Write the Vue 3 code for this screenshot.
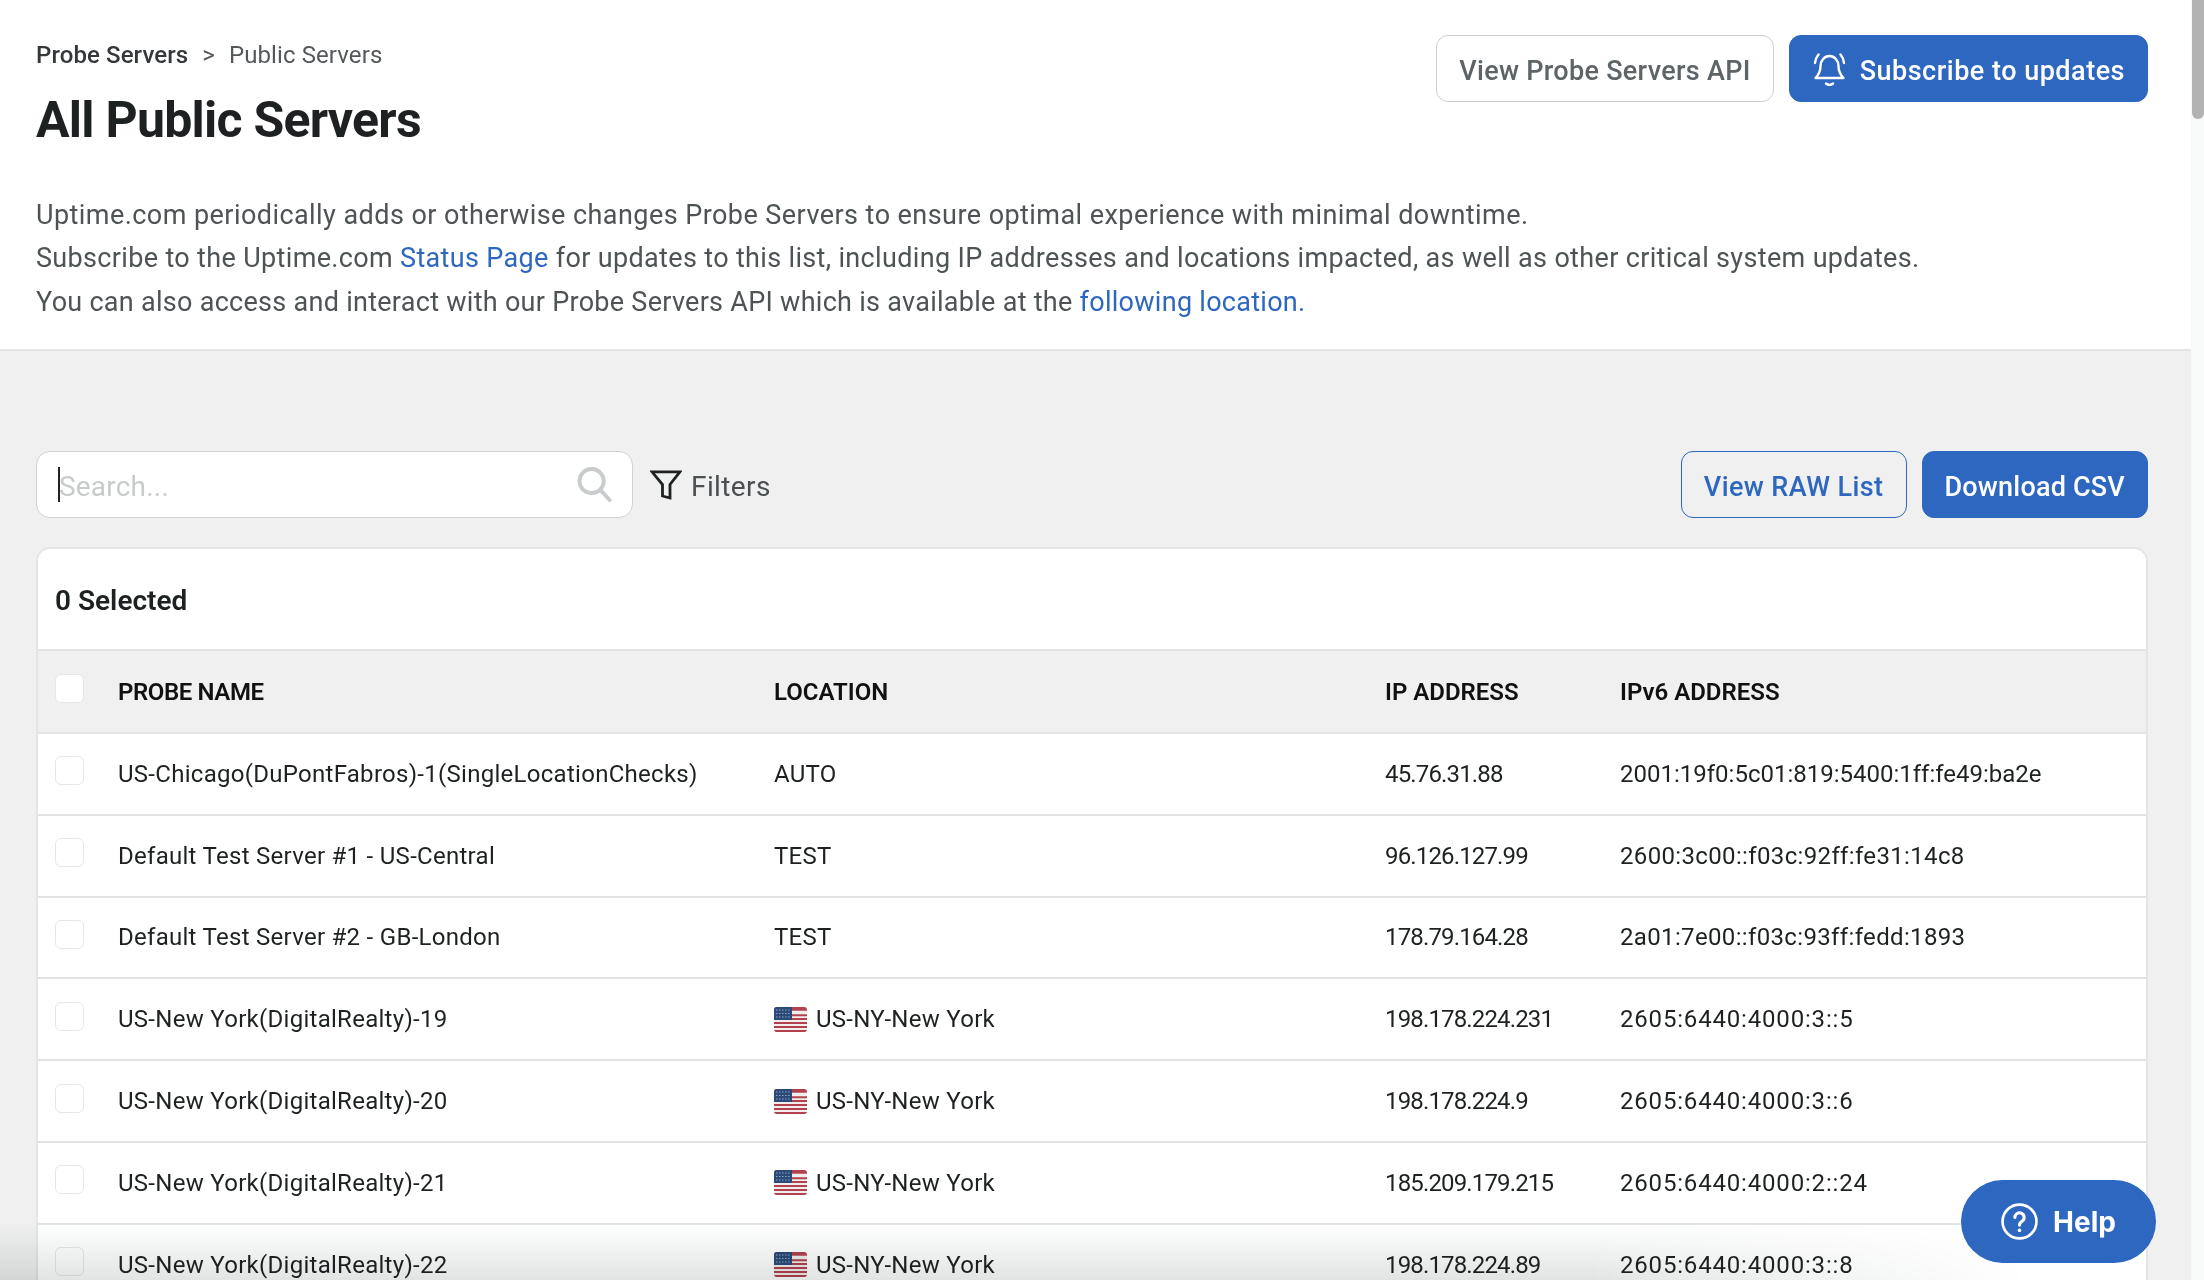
<template>
  <div class="page">
    <div class="main">
      <header class="top">
        <div class="top-row">
          <div>
            <div class="crumbs">
              <span class="crumb-link">Probe Servers</span>
              <span class="crumb-sep">&gt;</span>
              <span>Public Servers</span>
            </div>
            <h1>All Public Servers</h1>
          </div>
          <div class="top-actions">
            <button class="btn btn-plain">View Probe Servers API</button>
            <button class="btn btn-blue btn-bell">
              <svg class="bell" viewBox="0 0 33 33" fill="none" stroke="currentColor" stroke-width="2.400" stroke-linecap="round" stroke-linejoin="round">
                <path d="M2.500 25C5.500 22 7.500 19 7.500 13a9 10 0 0 1 18 0c0 6 2 9 5 12z" />
                <path d="M13 30.500q3.500 2.800 7 0" />
                <path d="M5.500 1.500Q2.500 5 2 10M27.500 1.500Q30.500 5 31 10" />
              </svg>
              Subscribe to updates
            </button>
          </div>
        </div>
        <div class="intro">
          <p>Uptime.com periodically adds or otherwise changes Probe Servers to ensure optimal experience with minimal downtime.</p>
          <p>Subscribe to the Uptime.com <a>Status Page</a> for updates to this list, including IP addresses and locations impacted, as well as other critical system updates.</p>
          <p>You can also access and interact with our Probe Servers API which is available at the <a>following location.</a></p>
        </div>
      </header>

      <section class="content">
        <div class="toolbar">
          <div class="search">
            <span class="caret"></span>
            <input type="text" placeholder="Search..." />
            <svg class="search-icon" viewBox="0 0 36 36" fill="none" stroke="currentColor" stroke-width="4" stroke-linecap="round">
              <circle cx="15" cy="14.500" r="12.500" />
              <path d="m24.500 24 9 10" />
            </svg>
          </div>
          <div class="filters">
            <svg class="filter-icon" viewBox="0 0 32 30" fill="none" stroke="currentColor" stroke-width="2.800" stroke-linejoin="miter">
              <path d="M2 1.800h28L20 14.500v13.500l-7.500-2V14.500z" />
            </svg>
            Filters
          </div>
          <div class="toolbar-right">
            <button class="btn btn-outline">View RAW List</button>
            <button class="btn btn-blue btn-csv">Download CSV</button>
          </div>
        </div>

        <div class="card">
          <div class="selected">0 Selected</div>
          <div class="row head">
            <span class="check"></span>
            <span class="probe-head">PROBE NAME</span>
            <span>LOCATION</span>
            <span>IP ADDRESS</span>
            <span>IPv6 ADDRESS</span>
          </div>
          <div v-for="p in probes" :key="p.name" class="row">
            <span class="check"></span>
            <span class="name">{{ p.name }}</span>
            <span class="loc">
              <svg v-if="p.flag" class="flag" viewBox="0 0 33 25">
                <rect width="33" height="25" rx="3" fill="#f3eded" />
                <path d="M0 3a3 3 0 0 1 3-3h27a3 3 0 0 1 3 3v.8H0zM0 7.200h33v2H0zM0 11h33v2H0zM0 15h33v2H0zM0 19h33v2H0zM0 23h33a3 3 0 0 1-2 2H2a3 3 0 0 1-2-2z" fill="#b3424f" />
                <path d="M0 3a3 3 0 0 1 3-3h15v13H0z" fill="#2b4a78" />
                <path d="M2 3h14M2 6.500h14M2 10h14" stroke="#8fa3bf" stroke-width="1.200" stroke-dasharray="1.500 1.500" />
              </svg>
              {{ p.location }}
            </span>
            <span class="ip">{{ p.ip }}</span>
            <span :class="p.v6">{{ p.ipv6 }}</span>
          </div>
        </div>
      </section>
    </div>

    <div class="scrollbar"><div class="thumb"></div></div>

    <div class="fade"></div>

    <button class="help">
      <svg class="help-icon" viewBox="0 0 36 36" fill="none" stroke="currentColor" stroke-width="2.600" stroke-linecap="round">
        <circle cx="18" cy="18" r="16.500" />
        <path d="M13.500 14a4.500 4.500 0 1 1 7 3.800c-1.600 1-2.500 1.800-2.500 3.700" stroke-width="3" />
        <circle cx="18" cy="26.500" r="1.300" fill="currentColor" stroke-width="1" />
      </svg>
      Help
    </button>
  </div>
</template>

<script setup>
const probes = [
  { name: 'US-Chicago(DuPontFabros)-1(SingleLocationChecks)', location: 'AUTO', ip: '45.76.31.88', ipv6: '2001:19f0:5c01:819:5400:1ff:fe49:ba2e', v6: 'v6-a' },
  { name: 'Default Test Server #1 - US-Central', location: 'TEST', ip: '96.126.127.99', ipv6: '2600:3c00::f03c:92ff:fe31:14c8', v6: 'v6-b' },
  { name: 'Default Test Server #2 - GB-London', location: 'TEST', ip: '178.79.164.28', ipv6: '2a01:7e00::f03c:93ff:fedd:1893', v6: 'v6-b' },
  { name: 'US-New York(DigitalRealty)-19', location: 'US-NY-New York', flag: true, ip: '198.178.224.231', ipv6: '2605:6440:4000:3::5', v6: 'v6-c' },
  { name: 'US-New York(DigitalRealty)-20', location: 'US-NY-New York', flag: true, ip: '198.178.224.9', ipv6: '2605:6440:4000:3::6', v6: 'v6-c' },
  { name: 'US-New York(DigitalRealty)-21', location: 'US-NY-New York', flag: true, ip: '185.209.179.215', ipv6: '2605:6440:4000:2::24', v6: 'v6-c' },
  { name: 'US-New York(DigitalRealty)-22', location: 'US-NY-New York', flag: true, ip: '198.178.224.89', ipv6: '2605:6440:4000:3::8', v6: 'v6-c' }
]
</script>

<style>
html, body {
  margin: 0;
  overflow: hidden;
}
</style>

<style scoped>
.page {
  display: flex;
  height: 1280px;
  overflow: hidden;
  position: relative;
  font-family: Roboto, "Liberation Sans", sans-serif;
  color: #1d2122;
}

.main {
  flex: 1;
  min-width: 0;
  background: #f0f0f0;
}

.top {
  background: #fff;
  height: 349px;
  border-bottom: 2px solid #e4e4e4;
  padding: 0 43px 0 36px;
}

.top-row {
  display: flex;
  justify-content: space-between;
  padding-top: 35px;
}

.crumbs {
  display: flex;
  gap: 14px;
  margin-top: 1px;
  margin-bottom: 1px;
  font-size: 24px;
  line-height: 38px;
  letter-spacing: 0.1px;
  color: #54585a;
}

.crumb-link {
  color: #34383a;
  font-weight: 500;
}

h1 {
  margin: 16px 0 0;
  font-size: 50px;
  line-height: 60px;
  font-weight: 700;
  letter-spacing: -0.75px;
  color: #1d2122;
}

.top-actions,
.toolbar-right {
  display: flex;
  gap: 15px;
}

.btn {
  display: flex;
  align-items: center;
  height: 67px;
  padding: 4px 22px 0;
  border-radius: 12px;
  font-family: inherit;
  font-size: 27px;
  font-weight: 500;
  letter-spacing: 0.4px;
  box-sizing: border-box;
  white-space: nowrap;
}

.btn-plain {
  background: #fff;
  border: 1px solid #ccd0d2;
  color: #5d6468;
  letter-spacing: 0.3px;
}

.btn-blue {
  background: #2d67bf;
  border: 1px solid #2d67bf;
  color: #fff;
}

.btn-outline {
  background: transparent;
  border: 1.5px solid #2d67bf;
  color: #2d67bf;
}

.btn-bell {
  padding-left: 23px;
  letter-spacing: 0.5px;
}

.btn-csv {
  letter-spacing: 0.2px;
}

.bell {
  width: 33px;
  height: 33px;
  margin-right: 14px;
  margin-top: -3px;
}

.intro {
  margin-top: 44px;
  font-size: 27px;
  line-height: 43.400px;
  color: #4e5355;
}

.intro p {
  margin: 0;
  letter-spacing: 0.34px;
}

.intro p:first-child {
  letter-spacing: 0.44px;
}

.intro p:last-child {
  letter-spacing: 0.28px;
}

.intro a {
  color: #2d67bf;
}

.content {
  padding: 100px 43px 0 36px;
}

.toolbar {
  display: flex;
  align-items: center;
  height: 67px;
}

.search {
  position: relative;
  width: 597px;
  height: 67px;
  box-sizing: border-box;
  border: 1.5px solid #d0d3d3;
  border-radius: 14px;
  background: #fff;
  display: flex;
  align-items: center;
  padding: 0 20px 0 22px;
}

.search input {
  flex: 1;
  border: 0;
  outline: 0;
  background: transparent;
  font-family: inherit;
  font-size: 28px;
  letter-spacing: 0.2px;
  color: #333;
  padding: 3px 0 0;
}

.search input::placeholder {
  color: #c7cbcb;
}

.caret {
  position: absolute;
  left: 21px;
  top: 15px;
  width: 2px;
  height: 35px;
  background: #222;
}

.search-icon {
  width: 35px;
  height: 35px;
  color: #c8cccc;
}

.filters {
  display: flex;
  align-items: center;
  gap: 9px;
  margin-left: 17px;
  padding-top: 4px;
  font-size: 28px;
  letter-spacing: 0.4px;
  color: #4a4f51;
}

.filter-icon {
  width: 32px;
  height: 30px;
  margin-top: -3px;
  color: #1d2122;
}

.toolbar-right {
  margin-left: auto;
}

.card {
  margin-top: 29px;
  background: #fff;
  border: 2px solid #e4e6e6;
  border-bottom: 0;
  border-radius: 14px 14px 0 0;
}

.selected {
  height: 100px;
  line-height: 103px;
  padding-left: 17px;
  font-size: 28px;
  font-weight: 600;
  color: #1d2122;
}

.row {
  display: grid;
  grid-template-columns: 63px 656px 611px 235px 1fr;
  align-items: center;
  height: 81.800px;
  box-sizing: border-box;
  border-top: 2px solid #e2e4e4;
  font-size: 24px;
  color: #1d2122;
  padding-left: 17px;
}

.head {
  background: #f0f0f0;
  font-weight: 600;
  color: #111;
  height: 83px;
}

.probe-head {
  letter-spacing: -0.4px;
}

.name,
.loc {
  letter-spacing: 0.28px;
}

.ip {
  letter-spacing: -0.85px;
}

.v6-b {
  letter-spacing: 0.35px;
}

.v6-c {
  letter-spacing: 0.82px;
}

.check {
  width: 29px;
  height: 29px;
  box-sizing: border-box;
  background: #fff;
  border: 1.5px solid #e6e8e8;
  border-radius: 6px;
  margin-top: -6px;
}

.loc {
  display: flex;
  align-items: center;
  gap: 9px;
}

.flag {
  width: 33px;
  height: 25px;
}

.scrollbar {
  width: 13px;
  background: #f8f9f9;
}

.thumb {
  height: 119px;
  margin-left: 1px;
  background: #b3b3b3;
  border-radius: 0 0 6px 6px;
}

/* grey shadow along the bottom: text stays dark, fades out to the right */
.fade {
  position: absolute;
  left: 0;
  right: 0;
  bottom: 0;
  height: 58px;
  background: linear-gradient(#fff, #e2e4e4);
  mix-blend-mode: multiply;
  mask-image: linear-gradient(to right, #000 72%, transparent 92%);
  pointer-events: none;
}

.help {
  position: absolute;
  left: 1961px;
  top: 1180px;
  width: 195px;
  height: 83px;
  border: 0;
  border-radius: 42px;
  background: #2d67bf;
  color: #fff;
  display: flex;
  align-items: center;
  justify-content: center;
  gap: 15px;
  font-family: Inter, sans-serif;
  font-size: 28px;
  font-weight: 700;
}

.help-icon {
  width: 37px;
  height: 37px;
}
</style>
